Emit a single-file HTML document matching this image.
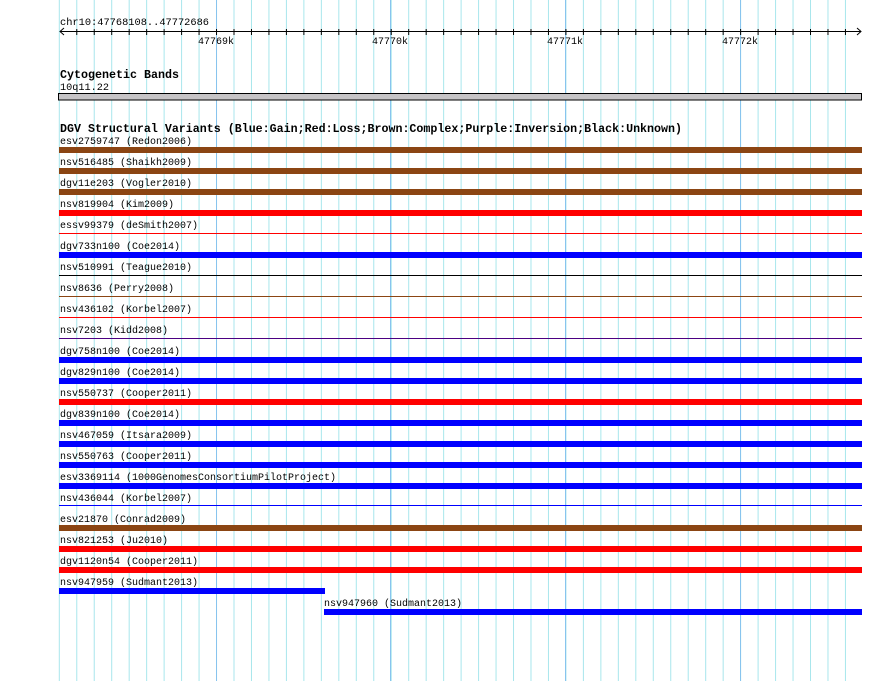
<!DOCTYPE html>
<html><head><meta charset="utf-8"><style>
html,body{margin:0;padding:0;background:#fff;width:890px;height:681px;overflow:hidden}
svg{display:block;position:absolute;left:0;top:0}
text{font-family:"Liberation Mono",monospace;fill:#000}
.l{font-size:10px}
.b{font-size:11.6px;font-weight:bold}
</style></head><body>
<svg width="890" height="681" viewBox="0 0 890 681" xmlns="http://www.w3.org/2000/svg" shape-rendering="crispEdges">
<defs>
<pattern id="g" patternUnits="userSpaceOnUse" x="58.8" y="0" width="17.47" height="681">
<rect x="0" y="0" width="1" height="681" fill="#a8e6ec"/>
</pattern>
<pattern id="t" patternUnits="userSpaceOnUse" x="58.8" y="0" width="17.47" height="681">
<rect x="0" y="0" width="1" height="681" fill="#000"/>
</pattern>
</defs>
<rect x="58" y="0" width="795" height="681" fill="url(#g)"/>
<g fill="#88c4ee">
<rect x="216" y="0" width="1" height="681"/>
<rect x="390" y="0" width="1" height="681"/>
<rect x="565" y="0" width="1" height="681"/>
<rect x="740" y="0" width="1" height="681"/>
</g>
<text class="l" x="60" y="25" textLength="149" lengthAdjust="spacingAndGlyphs">chr10:47768108..47772686</text>
<rect x="60" y="31" width="801" height="1" fill="#000"/>
<rect x="76" y="29" width="777" height="6" fill="url(#t)"/>
<path d="M64 28 L60 31.5 L64 35 M857 28 L861 31.5 L857 35" stroke="#000" fill="none" shape-rendering="auto"/>
<text class="l" x="198" y="44" textLength="36" lengthAdjust="spacingAndGlyphs">47769k</text>
<text class="l" x="372" y="44" textLength="36" lengthAdjust="spacingAndGlyphs">47770k</text>
<text class="l" x="547" y="44" textLength="36" lengthAdjust="spacingAndGlyphs">47771k</text>
<text class="l" x="722" y="44" textLength="36" lengthAdjust="spacingAndGlyphs">47772k</text>
<text class="b" x="60" y="78" textLength="119" lengthAdjust="spacingAndGlyphs">Cytogenetic Bands</text>
<text class="l" x="60" y="90" textLength="49" lengthAdjust="spacingAndGlyphs">10q11.22</text>
<rect x="58.5" y="93.5" width="803" height="6.5" fill="#c6c4c6" stroke="#000" stroke-width="1"/>
<text class="b" x="60" y="132" textLength="622" lengthAdjust="spacingAndGlyphs">DGV Structural Variants (Blue:Gain;Red:Loss;Brown:Complex;Purple:Inversion;Black:Unknown)</text>
<g>
<text class="l" x="60" y="144">esv2759747 (Redon2006)</text>
<text class="l" x="60" y="165">nsv516485 (Shaikh2009)</text>
<text class="l" x="60" y="186">dgv11e203 (Vogler2010)</text>
<text class="l" x="60" y="207">nsv819904 (Kim2009)</text>
<text class="l" x="60" y="228">essv99379 (deSmith2007)</text>
<text class="l" x="60" y="249">dgv733n100 (Coe2014)</text>
<text class="l" x="60" y="270">nsv510991 (Teague2010)</text>
<text class="l" x="60" y="291">nsv8636 (Perry2008)</text>
<text class="l" x="60" y="312">nsv436102 (Korbel2007)</text>
<text class="l" x="60" y="333">nsv7203 (Kidd2008)</text>
<text class="l" x="60" y="354">dgv758n100 (Coe2014)</text>
<text class="l" x="60" y="375">dgv829n100 (Coe2014)</text>
<text class="l" x="60" y="396">nsv550737 (Cooper2011)</text>
<text class="l" x="60" y="417">dgv839n100 (Coe2014)</text>
<text class="l" x="60" y="438">nsv467059 (Itsara2009)</text>
<text class="l" x="60" y="459">nsv550763 (Cooper2011)</text>
<text class="l" x="60" y="480">esv3369114 (1000GenomesConsortiumPilotProject)</text>
<text class="l" x="60" y="501">nsv436044 (Korbel2007)</text>
<text class="l" x="60" y="522">esv21870 (Conrad2009)</text>
<text class="l" x="60" y="543">nsv821253 (Ju2010)</text>
<text class="l" x="60" y="564">dgv1120n54 (Cooper2011)</text>
<text class="l" x="60" y="585">nsv947959 (Sudmant2013)</text>
<text class="l" x="324" y="606">nsv947960 (Sudmant2013)</text>
</g>
<g>
<rect x="59" y="147" width="803" height="6" fill="#8b4513"/>
<rect x="59" y="168" width="803" height="6" fill="#8b4513"/>
<rect x="59" y="189" width="803" height="6" fill="#8b4513"/>
<rect x="59" y="210" width="803" height="6" fill="#ff0000"/>
<rect x="59" y="233" width="803" height="1" fill="#ff0000"/>
<rect x="59" y="252" width="803" height="6" fill="#0000ff"/>
<rect x="59" y="275" width="803" height="1" fill="#000000"/>
<rect x="59" y="296" width="803" height="1" fill="#8b4513"/>
<rect x="59" y="317" width="803" height="1" fill="#ff0000"/>
<rect x="59" y="338" width="803" height="1" fill="#4b0082"/>
<rect x="59" y="357" width="803" height="6" fill="#0000ff"/>
<rect x="59" y="378" width="803" height="6" fill="#0000ff"/>
<rect x="59" y="399" width="803" height="6" fill="#ff0000"/>
<rect x="59" y="420" width="803" height="6" fill="#0000ff"/>
<rect x="59" y="441" width="803" height="6" fill="#0000ff"/>
<rect x="59" y="462" width="803" height="6" fill="#0000ff"/>
<rect x="59" y="483" width="803" height="6" fill="#0000ff"/>
<rect x="59" y="505" width="803" height="1" fill="#0000ff"/>
<rect x="59" y="525" width="803" height="6" fill="#8b4513"/>
<rect x="59" y="546" width="803" height="6" fill="#ff0000"/>
<rect x="59" y="567" width="803" height="6" fill="#ff0000"/>
<rect x="59" y="588" width="266" height="6" fill="#0000ff"/>
<rect x="324" y="609" width="538" height="6" fill="#0000ff"/>
</g>
</svg>
</body></html>
